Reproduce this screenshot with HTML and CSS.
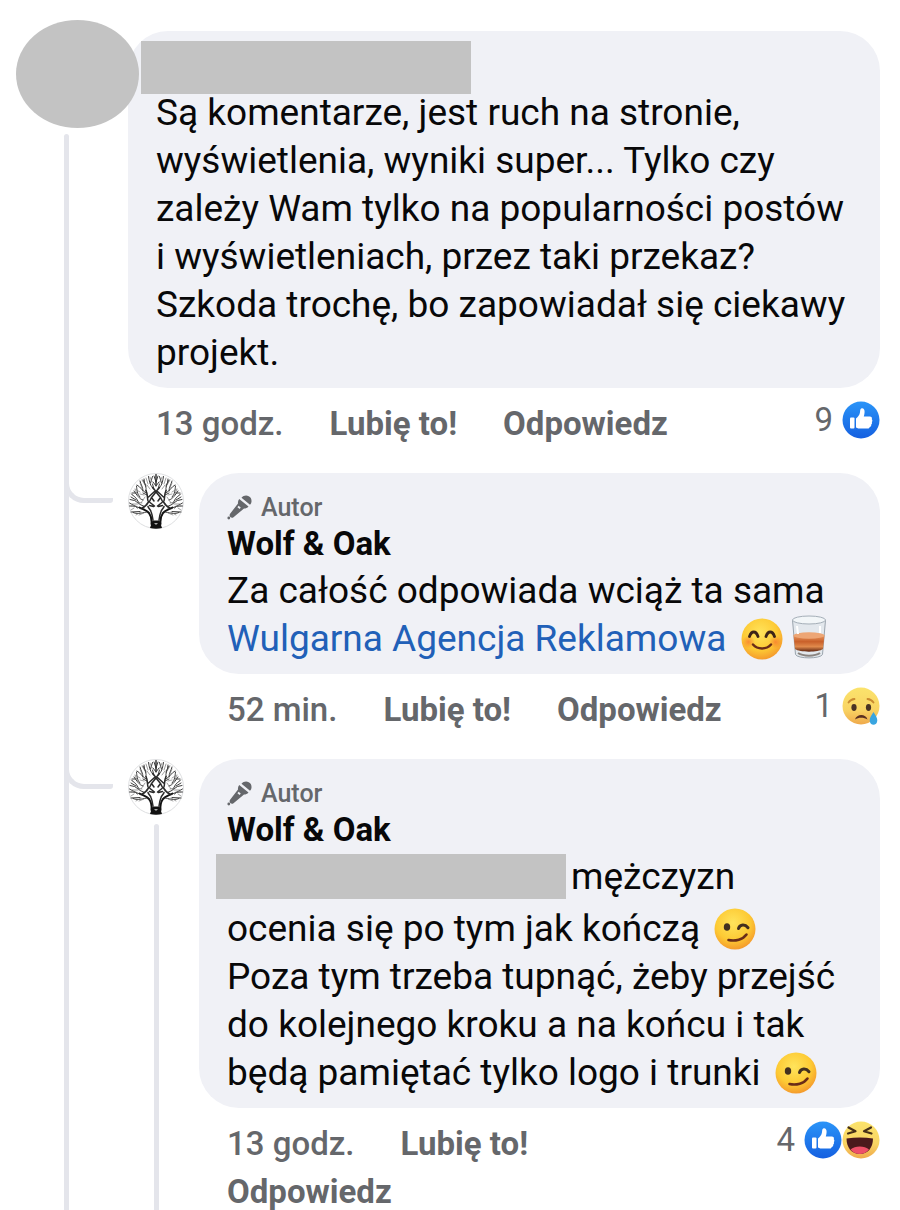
FILE: index.html
```html
<!DOCTYPE html>
<html lang="pl">

<head>
  <meta charset="UTF-8" />
  <meta name="viewport" content="width=device-width, initial-scale=1.0" />
  <title>Komentarze</title>
  <link rel="stylesheet" href="styles.css">
</head>

<body>
  <svg class="sprite" aria-hidden="true">
    <defs>
      <linearGradient id="blue" x1="0" y1="0" x2="0" y2="1">
        <stop offset="0" stop-color="#2a94f8" />
        <stop offset="1" stop-color="#1560e0" />
      </linearGradient>
      <radialGradient id="yellow" cx="0.45" cy="0.35" r="0.7">
        <stop offset="0" stop-color="#ffe45c" />
        <stop offset="0.6" stop-color="#fdca34" />
        <stop offset="1" stop-color="#f3912b" />
      </radialGradient>
      <linearGradient id="pale" x1="0" y1="0" x2="0" y2="1">
        <stop offset="0" stop-color="#fbe36c" />
        <stop offset="0.6" stop-color="#f9d463" />
        <stop offset="1" stop-color="#efa94b" />
      </linearGradient>
      <linearGradient id="whisky" x1="0" y1="0" x2="0" y2="1">
        <stop offset="0" stop-color="#e99a62" />
        <stop offset="0.4" stop-color="#c9602a" />
        <stop offset="0.7" stop-color="#e08a4c" />
        <stop offset="1" stop-color="#5e2410" />
      </linearGradient>
      <radialGradient id="cheek">
        <stop offset="0" stop-color="#f7702f" stop-opacity="0.7" />
        <stop offset="1" stop-color="#f7702f" stop-opacity="0" />
      </radialGradient>
    </defs>

    <symbol id="like" viewBox="0 0 38 38">
      <circle cx="19" cy="19" r="18.5" fill="url(#blue)" />
      <rect x="8" y="16.5" width="4.5" height="11" rx="1" fill="#fff" />
      <path fill="#fff" d="M14 17.5c2-1.500 3.600-3.600 4-6.300.2-2 .3-3.700 1.700-4 2-.3 3 1.600 2.900 3.800 0 1.600-.4 3-.8 4.500h6c1.700 0 2.600 1.300 2 2.700.8.800.8 2 0 2.900.5 1 .2 2-.6 2.600.2 1.300-.5 2.200-1.500 2.400-.2 1-1 1.500-2 1.500h-7c-2 0-3-.4-4.700-1.200z" />
    </symbol>

    <symbol id="sad" viewBox="0 0 38 38">
      <circle cx="19" cy="19" r="18.5" fill="url(#pale)" />
      <ellipse cx="12" cy="20.500" rx="2.600" ry="3.400" fill="#4a3324" />
      <ellipse cx="26.500" cy="20.500" rx="2.600" ry="3.400" fill="#4a3324" />
      <path d="M6.500 15.500c1.500-2.200 3.500-3.300 6-3.500M25.500 12c2.500.2 4.500 1.300 6 3.500" fill="none" stroke="#c98a30" stroke-width="1.800" stroke-linecap="round" />
      <path d="M13 32.500c1.500-6 11-6 12.500 0-3.500-2.200-9-2.200-12.500 0z" fill="#5a2f20" />
      <path d="M31.500 25c2.200 3.600 3.800 5.700 3.800 8.300 0 6-7.600 6-7.600 0 0-2.600 1.600-4.700 3.800-8.300z" fill="#39a5e0" />
    </symbol>

    <symbol id="haha" viewBox="0 0 38 38">
      <circle cx="19" cy="19" r="18.5" fill="url(#pale)" />
      <path d="M6.500 6.500l7 3.700-7.500 2.300M29 6.500l-7 3.700 7.500 2.300" fill="none" stroke="#463018" stroke-width="2.200" stroke-linecap="round" stroke-linejoin="round" />
      <path d="M4.500 17.500c9-1.500 18-1.500 26.500 0 0 9-5 15.500-13.200 15.500S4.500 26.500 4.500 17.500z" fill="#4b1a1c" />
      <path d="M8.500 28.500c4.500-4 14-4 18.500 0-5 6-13.500 6-18.500 0z" fill="#ee5068" />
    </symbol>

    <symbol id="smile" viewBox="0 0 42 42">
      <circle cx="21" cy="21" r="20.5" fill="url(#yellow)" />
      <circle cx="7.500" cy="24" r="6.500" fill="url(#cheek)" />
      <circle cx="34.500" cy="24" r="6.500" fill="url(#cheek)" />
      <path d="M8.500 18.500c2-6 6.500-6 8.500 0M25 18.500c2-6 6.500-6 8.500 0" fill="none" stroke="#3d2417" stroke-width="2.800" stroke-linecap="round" />
      <path d="M12 26.500c4.500 5.300 13.500 5.300 18 0" fill="none" stroke="#6a2c18" stroke-width="2.400" stroke-linecap="round" />
    </symbol>

    <symbol id="wink" viewBox="0 0 42 42">
      <circle cx="21" cy="21" r="20.5" fill="url(#yellow)" />
      <ellipse cx="13" cy="19" rx="3.200" ry="3.800" fill="#43301f" />
      <path d="M24.500 20.500c1.500-4.300 6.500-4.600 9.500-.8" fill="none" stroke="#43301f" stroke-width="3" stroke-linecap="round" />
      <path d="M14.500 32c7 1.500 14.500-.6 18-5.500" fill="none" stroke="#6a2c18" stroke-width="2.600" stroke-linecap="round" />
    </symbol>

    <symbol id="glass" viewBox="0 0 42 46">
      <path d="M4.500 6l3 34.500c2 4.500 25 4.500 27 0l3-34.500z" fill="#e3e8ed" stroke="#9aa4ad" />
      <path d="M5.500 21c7 3.500 24 3.500 31 0l-1.500 14c-4.500 3.500-23.500 3.500-28 0z" fill="url(#whisky)" />
      <ellipse cx="21" cy="21.500" rx="15.500" ry="3.200" fill="#eda675" />
      <path d="M10 39c5 3.500 17 3.500 22 0" fill="none" stroke="#8a8480" stroke-width="2" />
      <ellipse cx="21" cy="6" rx="16.500" ry="4" fill="#f2f6f8" stroke="#a5afb8" />
      <path d="M9 12l1 8M32 12v7" stroke="#fff" stroke-width="2" />
    </symbol>

    <symbol id="mic" viewBox="0 0 26 26">
      <path fill="#65676b" d="M14.500 2.800c2.500-3.500 7.300-3 9.300.2 1.300 2.500.8 5.300-.8 6.800zM12.200 4l9.300 7.500c-1.200 1.500-2.700 2-4.500 2L6.500 22.200c-1 .8-2.400.6-3.200-.2s-1-2.200-.2-3.200L11 8.500c-.2-1.600.1-3.100 1.200-4.500z" />
      <circle cx="1.800" cy="23" r="1.400" fill="#65676b" />
      <path d="M11 11.500l2.200 1.800" stroke="#f0f1f6" stroke-width="1.800" />
    </symbol>

    <!-- left half of the tree, mirrored below -->
    <symbol id="tree" viewBox="0 0 56 56">
      <circle cx="28" cy="28" r="27.5" fill="#fff" stroke="#dedfe1" />
      <g id="half" fill="none" stroke="#2a2a2a" stroke-linecap="round">
        <path stroke="#111" stroke-width="2" d="M23.500 51c.5-5-.3-8-2.500-11-2.500-3-6-3.500-9.500-5.500" />
        <path stroke-width="1.500" d="M25 47c-.5-3.500-1-6-2-8.500-.5-2-2.500-3-3-5M14 35c3-1 5-3.500 6.500-6M20.500 29c-2-3 0-7-2.500-11.500M20.500 24l6-5.500M28 19l-4.500 5.500 2.500 3.500M22 29.500l4.500 3.500M21.500 32.500l4 1M24.500 14.500l3.500 4M23.500 24.500l-2 4" />
        <path stroke-width=".9" d="M20 39c-5 0-9 3-15 .5M12 38.500l-9 .5M13 36c-4-3-7-3-11.500-3M9.500 35c-3-3-5-3-8-5M15.500 33c-4-1-6-4-9-5.500L2 26.500M11 30c-2-3-2-5-7-8.500M15 27c-4-1-6-5-9-9M12 24c-3-3-3-7-3.500-11M8 20H4M18 20c-4-2-5-6-9-8M15 18c0-4-2-6-3-10M18 18c1-4-2-7-2-12M18 13l-3-6M24.500 14.500c-3-3-3-6-4-11M22.500 10l2-6.500M28 12V1.500M28 9l-2-6M28 13l-3-4M26 16l-1.500-5M19 22l-4-2M8 27l-5-3" />
        <path stroke="#777" stroke-width=".7" d="M6 35l-3 2M8 33H3M10 31H4M7 24l-4-3M10 22l-3-5M12 19l-5-3M14 15l-2-5M17 12l-3-5M20 11l-2-6M22 16l-3-4M24 9l-2-5M14 30l-5-1M13 39l-5 3M16 40l-5 2M17 24l-4 6M16 22l-4-1" />
      </g>
      <use href="#half" transform="matrix(-1 0 0 1 56 0)" />
      <path d="M24.500 47.500h7l2.500 7.500c-4 1-8 1-12 0z" fill="#111" />
      <path d="M26 50h4l-2 2z" fill="#aaa" />
    </symbol>
  </svg>

  <main>
    <article class="comment">
      <div class="rail">
        <div class="photo"></div>
        <div class="line"></div>
      </div>
      <div class="content">
        <div class="bubble">
          <div class="hidden-name"></div>
          <p>Są komentarze, jest ruch na stronie, wyświetlenia, wyniki super... Tylko czy zależy Wam tylko na popularności postów i&nbsp;wyświetleniach, przez taki przekaz? Szkoda trochę, bo zapowiadał się ciekawy projekt.</p>
        </div>
        <footer>
          <div class="actions">
            <time>13 godz.</time>
            <button>Lubię to!</button>
            <button>Odpowiedz</button>
          </div>
          <div class="reactions">
            <span>9</span>
            <svg role="img" aria-label="Lubię to"><use href="#like" /></svg>
          </div>
        </footer>

        <article class="comment reply">
          <div class="rail">
            <svg class="logo" role="img" aria-label="Wolf &amp; Oak"><use href="#tree" /></svg>
          </div>
          <div class="content">
            <div class="bubble">
              <div class="author"><svg aria-hidden="true"><use href="#mic" /></svg>Autor</div>
              <h2>Wolf &amp; Oak</h2>
              <p>Za całość odpowiada wciąż ta sama <a href="#">Wulgarna Agencja Reklamowa</a> <svg class="emoji" role="img" aria-label="uśmiech"><use href="#smile" /></svg><svg class="emoji drink" role="img" aria-label="whisky"><use href="#glass" /></svg></p>
            </div>
            <footer>
              <div class="actions">
                <time>52 min.</time>
                <button>Lubię to!</button>
                <button>Odpowiedz</button>
              </div>
              <div class="reactions">
                <span>1</span>
                <svg role="img" aria-label="Przykro mi"><use href="#sad" /></svg>
              </div>
            </footer>
          </div>
        </article>

        <article class="comment reply">
          <div class="rail">
            <svg class="logo" role="img" aria-label="Wolf &amp; Oak"><use href="#tree" /></svg>
            <div class="line"></div>
          </div>
          <div class="content">
            <div class="bubble">
              <div class="author"><svg aria-hidden="true"><use href="#mic" /></svg>Autor</div>
              <h2>Wolf &amp; Oak</h2>
              <p><span class="hidden-mention"></span>mężczyzn<br>ocenia się po tym jak kończą <svg class="emoji" role="img" aria-label="oczko"><use href="#wink" /></svg><br>Poza tym trzeba tupnąć, żeby przejść do kolejnego kroku a na końcu i tak będą pamiętać tylko logo i trunki <svg class="emoji" role="img" aria-label="oczko"><use href="#wink" /></svg></p>
            </div>
            <footer>
              <div class="actions">
                <time>13 godz.</time>
                <button>Lubię to!</button>
                <button>Odpowiedz</button>
              </div>
              <div class="reactions">
                <span>4</span>
                <svg class="front" role="img" aria-label="Lubię to"><use href="#like" /></svg>
                <svg role="img" aria-label="Ha ha"><use href="#haha" /></svg>
              </div>
            </footer>
          </div>
        </article>
      </div>
    </article>
  </main>
</body>

</html>
```

FILE: styles.css
```css
*,
*::before {
  box-sizing: border-box;
}

body {
  margin: 0;
  background-color: #fff;
  color: #080809;
  font-family: Roboto, "Liberation Sans", sans-serif;
  font-size: 37px;
  line-height: 48px;
}

h2,
p {
  margin: 0;
}

a {
  color: #2160b8;
  text-decoration: none;
}

.sprite {
  position: absolute;
  width: 0;
  height: 0;
}

main {
  padding: 20px 20px 0 0;
}

.comment {
  display: flex;
}

.rail {
  display: flex;
  flex-direction: column;
  align-items: center;
  flex: none;
  width: 128px;
  padding-left: 5px;
}

.content {
  flex: 1;
  min-width: 0;
  padding-top: 11px;
}

.photo {
  position: relative;
  left: 11px;
  width: 123px;
  height: 108px;
  border-radius: 50%;
  background-color: #c3c3c3;
}

.line {
  flex: 1;
  width: 5px;
  margin-top: 6px;
  border-radius: 3px 3px 0 0;
  background-color: #e4e5eb;
}

.bubble {
  padding: 10px 26px 11px 28px;
  border-radius: 40px;
  background-color: #f0f1f6;
}

.hidden-name {
  width: 330px;
  height: 53px;
  margin: 0 0 -5px -15px;
  background-color: #c3c3c3;
}

footer {
  display: flex;
  align-items: flex-start;
  padding: 17px 0 0 28px;
  color: #65676b;
  font-size: 33px;
  line-height: 38px;
}

time {
  font-weight: 500;
}

.actions {
  display: flex;
  flex: 1;
  flex-wrap: wrap;
  gap: 10px 46px;
}

button {
  padding: 0;
  border: 0;
  background: none;
  color: inherit;
  font: inherit;
  font-weight: 700;
}

.reactions {
  display: flex;
  align-items: center;
  margin: -4px 0 0 48px;
}

.reactions span {
  margin-right: 9px;
}

.reactions svg {
  width: 38px;
  height: 38px;
}

.reactions .front {
  z-index: 1;
}

/* replies */
.reply {
  position: relative;
  margin-top: 30px;
}

.reply::before {
  content: "";
  position: absolute;
  top: -4px;
  left: -64px;
  width: 49px;
  height: 34px;
  border-bottom: 5px solid #e4e5eb;
  border-left: 5px solid #e4e5eb;
  border-radius: 0 0 3px 20px;
}

.reply .rail {
  width: 71px;
  padding: 0 15px 0 0;
}

.reply .content {
  padding-top: 0;
}

.reply .line {
  margin-top: 9px;
}

.reply .bubble {
  padding-top: 17px;
}

.logo {
  width: 56px;
  height: 56px;
}

.author {
  display: flex;
  align-items: center;
  gap: 8px;
  color: #65676b;
  font-size: 25px;
  font-weight: 500;
  line-height: 36px;
}

.author svg {
  width: 26px;
  height: 26px;
}

h2 {
  margin-bottom: 5px;
  font-size: 33px;
  font-weight: 700;
  line-height: 36px;
}

.emoji {
  width: 42px;
  height: 42px;
  margin: -4px 5px;
  vertical-align: -5px;
}

.drink {
  height: 46px;
  margin-left: 0;
}

.hidden-mention {
  display: inline-block;
  width: 350px;
  height: 45px;
  margin: 1px 5px 6px -11px;
  background-color: #c3c3c3;
  vertical-align: top;
}
```
